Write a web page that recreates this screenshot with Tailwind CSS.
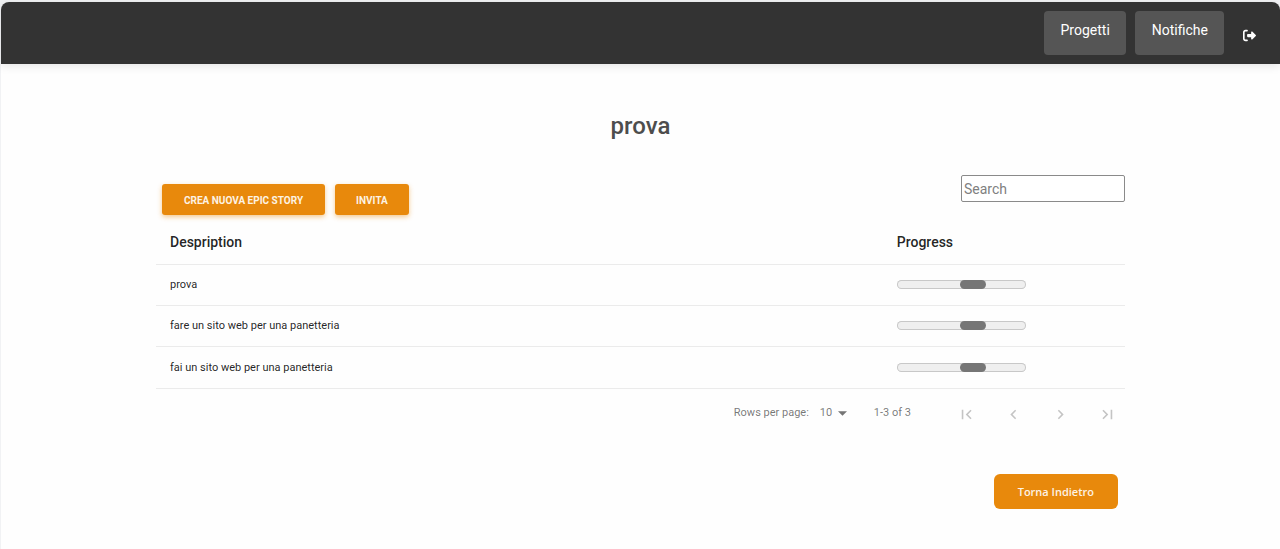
<!DOCTYPE html>
<html lang="it">
<head>
<meta charset="utf-8">
<meta name="viewport" content="width=device-width, initial-scale=1">
<title>prova</title>
<script src="https://cdn.jsdelivr.net/npm/@tailwindcss/browser@4"></script>
</head>
<body class="min-h-screen bg-[#f1f2f4] pt-0.5 pl-px font-['Roboto',sans-serif] text-black/87">
<div class="min-h-screen rounded-t-lg bg-[#fefefe]">
  <header class="flex h-[62px] items-center justify-end gap-[9px] rounded-t-lg bg-[#333] pr-6 shadow-[0_2px_10px_rgba(0,0,0,0.1)]">
    <a href="#" class="h-11 rounded-[4px] bg-[#555] pr-4 pl-[17px] pt-[9px] text-sm text-white">Progetti</a>
    <a href="#" class="h-11 rounded-[4px] bg-[#555] pr-4 pl-[17px] pt-[9px] text-sm text-white">Notifiche</a>
    <button type="button" aria-label="Esci" class="mt-1 ml-2.5 text-white">
      <svg class="size-[13px]" viewBox="0 0 512 512" fill="currentColor"><path d="M502.600 278.600c12.500-12.500 12.500-32.800 0-45.300l-128-128c-9.200-9.200-22.900-11.900-34.900-6.900s-19.800 16.600-19.800 29.600v64H192c-17.700 0-32 14.300-32 32v64c0 17.700 14.300 32 32 32h128v64c0 12.900 7.800 24.600 19.800 29.600s25.700 2.200 34.900-6.900l128-128zM160 96c17.700 0 32-14.300 32-32s-14.300-32-32-32H96C43 32 0 75 0 128v256c0 53 43 96 96 96h64c17.700 0 32-14.300 32-32s-14.300-32-32-32H96c-17.700 0-32-14.300-32-32V128c0-17.700 14.300-32 32-32h64z"/></svg>
    </button>
  </header>

  <main class="mx-auto w-full max-w-[969px] pt-[46px]">
    <h1 class="text-center text-2xl font-medium text-[#4d4d4d]">prova</h1>

    <div class="mt-[33px] flex items-start justify-between">
      <div class="flex gap-2.5 pt-[9px] pl-1.5">
        <button type="button" class="h-[31px] rounded-[3px] bg-[#e8890c] px-[22px] pt-0.5 text-[10px] font-bold text-[#fdf3e4] shadow-[0_2px_5px_rgba(232,137,12,0.45)]">CREA NUOVA EPIC STORY</button>
        <button type="button" class="h-[31px] rounded-[3px] bg-[#e8890c] px-[21px] pt-0.5 text-[10px] font-bold text-[#fdf3e4] shadow-[0_2px_5px_rgba(232,137,12,0.45)]">INVITA</button>
      </div>
      <input type="text" placeholder="Search" aria-label="Search" class="h-[27px] w-[164px] rounded-[2px] border border-[#8a8a8a] bg-white px-0.5 text-sm placeholder:text-[#808080]">
    </div>

    <table class="mt-[5px] w-full table-fixed text-left">
      <colgroup><col class="w-3/4"><col class="w-1/4"></colgroup>
      <thead>
        <tr class="h-11 border-b border-[#ebebeb] text-sm">
          <th class="px-3.5 font-medium">Despription</th>
          <th class="px-3.5 font-medium">Progress</th>
        </tr>
      </thead>
      <tbody class="text-[11px]">
        <tr class="h-[41px] border-b border-[#ebebeb]">
          <td class="px-3.5 pt-0.5">prova</td>
          <td class="px-3.5"><div role="progressbar" aria-label="prova" class="flex h-[9px] w-[129px] rounded-full bg-[#efefef] pl-[63px] inset-ring inset-ring-[#c8c8c8]"><div class="h-full w-[26px] rounded-full bg-[#767676]"></div></div></td>
        </tr>
        <tr class="h-[41px] border-b border-[#ebebeb]">
          <td class="px-3.5 pt-0.5">fare un sito web per una panetteria</td>
          <td class="px-3.5"><div role="progressbar" aria-label="fare un sito web per una panetteria" class="flex h-[9px] w-[129px] rounded-full bg-[#efefef] pl-[63px] inset-ring inset-ring-[#c8c8c8]"><div class="h-full w-[26px] rounded-full bg-[#767676]"></div></div></td>
        </tr>
        <tr class="h-[42px] border-b border-[#ebebeb]">
          <td class="px-3.5 pt-0.5">fai un sito web per una panetteria</td>
          <td class="px-3.5"><div role="progressbar" aria-label="fai un sito web per una panetteria" class="flex h-[9px] w-[129px] rounded-full bg-[#efefef] pl-[63px] inset-ring inset-ring-[#c8c8c8]"><div class="h-full w-[26px] rounded-full bg-[#767676]"></div></div></td>
        </tr>
      </tbody>
    </table>

    <nav aria-label="Paginazione" class="flex h-[50px] items-center justify-end pr-2 text-[11px] text-black/54">
      <label for="rows">Rows per page:</label>
      <div class="relative ml-[11px] flex items-center">
        <select id="rows" class="w-[30px] appearance-none bg-transparent"><option>10</option><option>15</option><option>20</option></select>
        <svg class="pointer-events-none absolute left-[18px] h-[5px] w-[9px]" viewBox="0 0 10 5" fill="currentColor"><path d="M0 0h10L5 5z"/></svg>
      </div>
      <span class="ml-6">1-3 of 3</span>
      <div class="mt-0.5 ml-[46px] flex gap-7 text-[#c4c4c4]">
        <button type="button" disabled aria-label="Prima pagina"><svg class="size-[19px]" viewBox="0 0 24 24" fill="currentColor"><path d="M18.410 16.590L13.820 12l4.590-4.590L17 6l-6 6 6 6zM6 6h2v12H6z"/></svg></button>
        <button type="button" disabled aria-label="Pagina precedente"><svg class="size-[19px]" viewBox="0 0 24 24" fill="currentColor"><path d="M15.410 7.410L14 6l-6 6 6 6 1.410-1.410L10.830 12z"/></svg></button>
        <button type="button" disabled aria-label="Pagina successiva"><svg class="size-[19px]" viewBox="0 0 24 24" fill="currentColor"><path d="M10 6L8.590 7.410 13.170 12l-4.580 4.590L10 18l6-6z"/></svg></button>
        <button type="button" disabled aria-label="Ultima pagina"><svg class="size-[19px]" viewBox="0 0 24 24" fill="currentColor"><path d="M5.590 7.410L10.180 12l-4.590 4.590L7 18l6-6-6-6zM16 6h2v12h-2z"/></svg></button>
      </div>
    </nav>

    <div class="mt-[35px] flex justify-end pr-[7px]">
      <button type="button" class="h-[35px] rounded-md bg-[#e8890c] px-6 pt-0.5 font-['Open_Sans',sans-serif] text-[11px] font-semibold text-[#fdf3e4]">Torna Indietro</button>
    </div>
  </main>
</div>
</body>
</html>
